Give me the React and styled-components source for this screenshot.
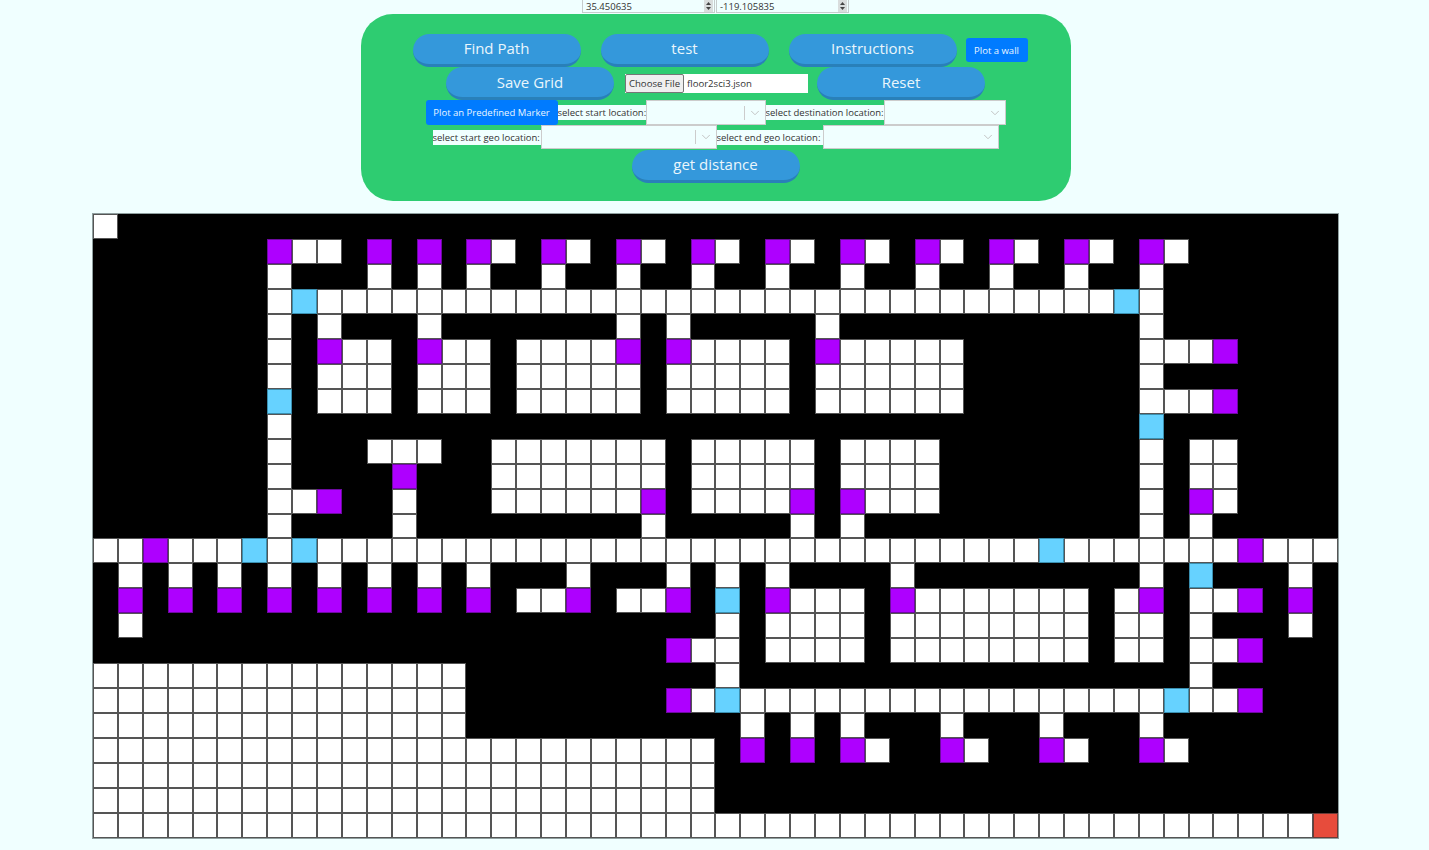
import React from 'react'
import styled, { createGlobalStyle } from 'styled-components'
import { ChevronDown } from 'lucide-react'

const font = '"Open Sans", "Noto Sans", sans-serif'

// one entry per grid row, tokens are column numbers or ranges
// w = walkable, p = purple marker, b = blue marker, r = red end marker
const floor = [
  { w: '0' },
  { p: '7 11 13 15 18 21 24 27 30 33 36 39 42', w: '8-9 16 19 22 25 28 31 34 37 40 43' },
  { w: '7 11 13 15 18 21 24 27 30 33 36 39 42' },
  { w: '7-42', b: '8 41' },
  { w: '7 9 13 21 23 29 42' },
  { w: '7 10-11 14-15 17-20 24-27 30-34 42-44', p: '9 13 21 23 29 45' },
  { w: '7 9-11 13-15 17-21 23-27 29-34 42' },
  { w: '9-11 13-15 17-21 23-27 29-34 42-44', b: '7', p: '45' },
  { w: '7', b: '42' },
  { w: '7 11-13 16-22 24-28 30-33 42 44-45' },
  { w: '7 16-22 24-28 30-33 42 44-45', p: '12' },
  { w: '7-8 12 16-21 24-27 31-33 42 45', p: '9 22 28 30 44' },
  { w: '7 12 22 28 30 42 44' },
  { w: '0-49', p: '2 46', b: '6 8 38' },
  { w: '1 3 5 7 9 11 13 15 19 23 25 27 32 42 48', b: '44' },
  {
    w: '17-18 21-22 28-30 33-39 41 44-45',
    p: '1 3 5 7 9 11 13 15 19 23 27 32 42 46 48',
    b: '25',
  },
  { w: '1 25 27-30 32-39 41-42 44 48' },
  { w: '24-25 27-30 32-39 41-42 44-45', p: '23 46' },
  { w: '0-14 25 44' },
  { w: '0-14 24 26-42 44-45', p: '23 46', b: '25 43' },
  { w: '0-14 26 28 30 34 38 42' },
  { w: '0-24 31 35 39 43', p: '26 28 30 34 38 42' },
  { w: '0-24' },
  { w: '0-24' },
  { w: '0-48', r: '49' },
]

const buildRow = spec => {
  const row = Array(50).fill('x')
  Object.keys(spec).forEach(kind => {
    spec[kind].split(' ').forEach(token => {
      const [from, to] = token.split('-').map(Number)
      for (let c = from; c <= (to === undefined ? from : to); c++) row[c] = kind
    })
  })
  return row
}

const cells = floor.flatMap(buildRow)

const GlobalStyle = createGlobalStyle`
  html, body {
    margin: 0;
    background: #f0ffff;
  }
`
const Page = styled.div`
  height: 850px;
  padding-left: 2px;
  overflow: hidden;
  font-family: ${font};
`
const Coords = styled.div`
  display: flex;
  justify-content: center;
  gap: 1px;
  height: 14px;
`
const CoordBox = styled.div`
  display: flex;
  align-items: center;
  justify-content: space-between;
  box-sizing: border-box;
  width: 133px;
  height: 13px;
  padding: 0 1px 0 3px;
  background: #f0ffff;
  border: 1px solid #c6cccc;
  border-top: 0;
  font-size: 9.5px;
  color: #333;
`
const Spinner = styled.span`
  display: flex;
  flex-direction: column;
  align-items: center;
  justify-content: center;
  gap: 2px;
  width: 9px;
  height: 12px;
  background: #d9dddd;
  svg {
    display: block;
  }
`
const Panel = styled.div`
  box-sizing: border-box;
  width: 710px;
  height: 187px;
  margin: 0 auto 13px;
  padding-top: 19px;
  background: #2ecc71;
  border-radius: 32px;
`
const Row = styled.div`
  display: flex;
  align-items: center;
  justify-content: center;
  gap: ${p => p.$gap || 0}px;
  height: ${p => p.$height}px;
  padding-left: ${p => p.$shift || 0}px;
`
const PillButton = styled.button`
  box-sizing: border-box;
  width: 168px;
  height: 33px;
  padding: 0 0 1px;
  background: #3498db;
  border: 0;
  border-bottom: 3px solid #2980b9;
  border-radius: 17px;
  color: #eaf6fc;
  font-family: ${font};
  font-size: 15px;
`
const SmallButton = styled.button`
  box-sizing: border-box;
  flex: none;
  width: ${p => p.$width}px;
  height: ${p => p.$height}px;
  margin-left: ${p => p.$left || 0}px;
  padding: 0;
  background: #007bff;
  border: 0;
  border-radius: 3px;
  color: #eaf6ff;
  font-family: ${font};
  font-size: 9.5px;
  white-space: nowrap;
`
const FilePicker = styled.div`
  display: flex;
  width: 183px;
  height: 19px;
  margin: 0 9px 0 11px;
  background: #fff;
  font-size: 9.6px;
  color: #333;
`
const FileButton = styled.span`
  display: flex;
  align-items: center;
  justify-content: center;
  box-sizing: border-box;
  width: 59px;
  background: #efefef;
  border: 1px solid #767676;
  border-radius: 2px;
`
const FileName = styled.span`
  display: flex;
  align-items: center;
  padding-left: 3px;
`
const Label = styled.span`
  flex: none;
  box-sizing: border-box;
  width: ${p => p.$width}px;
  height: 15px;
  overflow: hidden;
  background: #f0ffff;
  color: #333;
  font-size: 9.5px;
  line-height: 15px;
  white-space: nowrap;
`
const SelectBox = styled.div`
  display: flex;
  flex: none;
  align-items: center;
  justify-content: flex-end;
  box-sizing: border-box;
  width: ${p => p.$width}px;
  height: ${p => p.$height}px;
  padding-right: 3px;
  background: #f0ffff;
  border: 1px solid #ccc;
  color: #bbb;
`
const SelectBar = styled.span`
  width: 1px;
  height: 14px;
  margin-right: 3px;
  background: #ccc;
`
const Board = styled.div`
  display: grid;
  grid-template-columns: repeat(50, 1fr);
  grid-template-rows: repeat(25, 1fr);
  width: 1245px;
  height: 624px;
  margin: 0 auto;
  background: #000;
  box-shadow: 0 0 0 1px #8f9f9f;
`
const kindFill = {
  x: '#000',
  w: '#fff',
  p: '#ae00ff',
  b: '#66d2ff',
  r: '#e74c3c',
}
const kindEdge = {
  x: '#000',
  w: '#555',
  p: '#6d0aa0',
  b: '#3a8fb0',
  r: '#6a3a36',
}
const Cell = styled.div`
  box-sizing: border-box;
  background: ${p => kindFill[p.$kind]};
  border: 1px solid ${p => kindEdge[p.$kind]};
`

const Arrows = () => (
  <Spinner>
    <svg width="5" height="3" viewBox="0 0 5 3">
      <path d="M2.5 0L5 3H0z" fill="#444" />
    </svg>
    <svg width="5" height="3" viewBox="0 0 5 3">
      <path d="M2.5 3L0 0h5z" fill="#444" />
    </svg>
  </Spinner>
)

const Select = ({ width, height, bar }) => (
  <SelectBox $width={width} $height={height}>
    {bar && <SelectBar />}
    <ChevronDown size={14} strokeWidth={1.5} />
  </SelectBox>
)

export default function App() {
  return (
    <Page>
      <GlobalStyle />
      <Coords>
        <CoordBox>
          35.450635
          <Arrows />
        </CoordBox>
        <CoordBox>
          -119.105835
          <Arrows />
        </CoordBox>
      </Coords>
      <Panel>
        <Row $height={34} $gap={20} $shift={9}>
          <PillButton>Find Path</PillButton>
          <PillButton>test</PillButton>
          <PillButton>Instructions</PillButton>
          <SmallButton $width={62} $height={24} $left={-11}>
            Plot a wall
          </SmallButton>
        </Row>
        <Row $height={33}>
          <PillButton>Save Grid</PillButton>
          <FilePicker>
            <FileButton>Choose File</FileButton>
            <FileName>floor2sci3.json</FileName>
          </FilePicker>
          <PillButton>Reset</PillButton>
        </Row>
        <Row $height={25}>
          <SmallButton $width={132} $height={25}>
            Plot an Predefined Marker
          </SmallButton>
          <Label $width={88}>select start location:</Label>
          <Select width={120} height={25} bar />
          <Label $width={118}>select destination location:</Label>
          <Select width={122} height={25} />
        </Row>
        <Row $height={24}>
          <Label $width={108}>select start geo location:</Label>
          <Select width={176} height={24} bar />
          <Label $width={106}>select end geo location:</Label>
          <Select width={176} height={24} />
        </Row>
        <Row $height={34}>
          <PillButton>get distance</PillButton>
        </Row>
      </Panel>
      <Board>
        {cells.map((kind, i) => (
          <Cell key={i} $kind={kind} />
        ))}
      </Board>
    </Page>
  )
}
